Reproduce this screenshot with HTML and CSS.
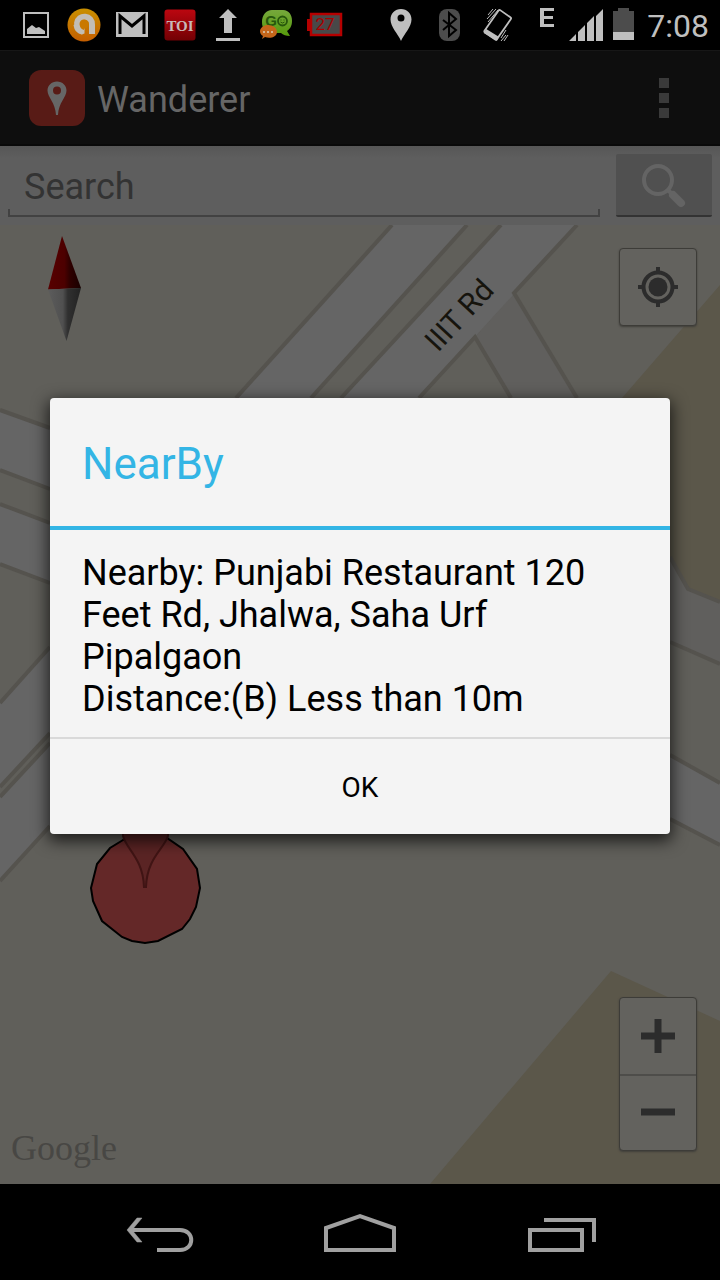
FILE: index.html
```html
<!DOCTYPE html>
<html lang="en">
<head>
<meta charset="utf-8">
<meta name="viewport" content="width=device-width, initial-scale=1">
<title>Wanderer</title>
<link rel="stylesheet" href="styles.css">
</head>
<body>
<div class="screen">
  <header class="status">
    <div class="status-group">
      <svg class="slot" viewBox="0 0 48 50"><rect x="24" y="13" width="24" height="24" transform="translate(-12 0)" fill="none" stroke="#bfbfbf" stroke-width="2"/><path d="M15 34v-5l5-4 4 3 3-1 6 4v3z" fill="#bfbfbf"/></svg>
      <svg class="slot" viewBox="0 0 48 50"><defs><linearGradient id="amber" x2="0" y2="1"><stop stop-color="#c99000"/><stop offset="1" stop-color="#c45e00"/></linearGradient></defs><circle cx="24" cy="25" r="16.500" fill="url(#amber)"/><path d="M23 31.500A7.500 7.500 0 1 1 32 24.500V34" fill="none" stroke="#c2bdb5" stroke-width="6"/><path d="M13.500 25q1 8 8 9.500l3-1v-5l-7-5z" fill="#c2bdb5"/><circle cx="24" cy="24" r="4.500" fill="#c97800"/><path d="M20 25h4v5q-4-1-4-5z" fill="#c97800"/></svg>
      <svg class="slot" viewBox="0 0 48 50"><path d="M8 12h32v25H8z" fill="#bfbfbf"/><path d="M12 34V16l12 10 12-10v18" fill="none" stroke="#000" stroke-width="3"/></svg>
      <svg class="slot" viewBox="0 0 48 50"><defs><linearGradient id="crimson" x2="0" y2="1"><stop stop-color="#bc0710"/><stop offset="1" stop-color="#720004"/></linearGradient></defs><rect x="8.500" y="9.500" width="31" height="31" rx="3" fill="url(#crimson)"/><text class="toi" x="24" y="31">TOI</text></svg>
      <svg class="slot" viewBox="0 0 48 50"><path d="M24 9l9 9h-5v15h-8V18h-5zM12 38h24v3H12z" fill="#bfbfbf"/></svg>
      <svg class="slot" viewBox="0 0 48 50"><defs><linearGradient id="leaf" x2="0" y2="1"><stop stop-color="#76a83c"/><stop offset="1" stop-color="#569a0c"/></linearGradient></defs><path d="M20 10h11c6 0 9 5 9 11 0 5-2 8-5 10l3 5q-6 0-9-3H18c-5 0-8-5-8-11 0-7 4-12 10-12z" fill="url(#leaf)"/><text class="go" x="19" y="26">G</text><circle cx="30.500" cy="21" r="4.500" fill="none" stroke="#27570c" stroke-width="1.800"/><path d="M28.500 20h1m2 0h1m-4 2q2 2 4 0" fill="none" stroke="#27570c"/><path d="M16 25c5 0 9 3 9 7 0 5-7 7-12 5l-3 2 1-3c-6-4-2-11 5-11z" fill="#c5661a"/><path d="M11 32h2m2 0h2m2 0h2" stroke="#d6b38f" stroke-width="2"/></svg>
      <svg class="slot" viewBox="0 0 48 50"><path d="M11 14h30v21H11z" fill="#484848" stroke="#b50000" stroke-width="2.500"/><path d="M7 19h4v12H7z" fill="#b50000"/><text class="level" x="25" y="30">27</text></svg>
    </div>
    <div class="status-group">
      <svg class="slot" viewBox="0 0 48 50"><path fill-rule="evenodd" d="M24 9c6 0 10.500 4.500 10.500 10.500C34.500 27 27 34 24 41 21 34 13.500 27 13.500 19.500 13.500 13.500 18 9 24 9zm0 5.500a3.500 3.500 0 1 0 0 7 3.500 3.500 0 0 0 0-7z" fill="#bfbfbf"/></svg>
      <svg class="slot" viewBox="0 0 48 50"><rect x="14" y="9" width="21" height="32" rx="8" fill="#4c4c4c"/><path d="M18 20l13 10-7 6V13l7 6-13 11" fill="none" stroke="#000" stroke-width="2"/></svg>
      <svg class="slot" viewBox="0 0 48 50"><g fill="none" stroke="#bfbfbf"><rect x="17" y="11" width="15" height="27" rx="1.500" stroke-width="1.800" transform="rotate(35 24 25)"/><path d="M12 31l13 8" stroke-width="4.500"/><path d="M15 15l5-6M14 19l9-10M15 22l10-12M28 41l5-6M31 41l4-6M28 38l5-8"/></g></svg>
      <svg class="signal" viewBox="0 0 76 50"><path d="M19 8h14v3H23v5h9v3h-9v5h10v3H19z" fill="#bfbfbf"/><path d="M48 41l7-7v7zM57 41v-9l7-7v16zM66 41V23l7-7v25zM75 41V16l7-7v32z" fill="#bfbfbf"/></svg>
      <svg class="battery" viewBox="0 0 22 50"><path d="M0 11h5V8h11v3h5v21H0z" fill="#4c4c4c"/><path d="M0 32h21v8H0z" fill="#bfbfbf"/></svg>
      <time class="clock">7:08</time>
    </div>
  </header>

  <div class="appbar">
    <svg class="logo" viewBox="0 0 56 56"><rect width="56" height="56" rx="12" fill="#581b16"/><path fill-rule="evenodd" d="M28 11.500c5.500 0 9.500 4 9.500 9 0 7-8 12-8.500 24.500h-2C26.500 32.500 18.500 27.500 18.500 20.500c0-5 4-9 9.500-9zm0 5a4 4 0 1 0 0 8 4 4 0 0 0 0-8z" fill="#666"/></svg>
    <h1 class="app-name">Wanderer</h1>
    <button class="overflow" type="button" aria-label="More options"><span class="dot"></span><span class="dot"></span><span class="dot"></span></button>
  </div>

  <form class="search">
    <div class="field"><input class="search-input" type="text" placeholder="Search" aria-label="Search"></div>
    <button class="search-button" type="button" aria-label="Search the map"><svg class="lens" viewBox="0 0 48 48"><circle cx="18" cy="19" r="14" fill="none" stroke="#646464" stroke-width="4"/><path d="M28 29l4 4" stroke="#646464" stroke-width="4"/><path d="M33 34l8 8" stroke="#646464" stroke-width="8" stroke-linecap="round"/></svg></button>
  </form>

  <main class="map">
    <svg class="map-canvas" viewBox="0 225 720 959" preserveAspectRatio="xMidYMid slice">
      <defs>
        <linearGradient id="red-needle"><stop stop-color="#580000"/><stop offset=".5" stop-color="#4c0000"/><stop offset=".65" stop-color="#300000"/><stop offset="1" stop-color="#180000"/></linearGradient>
        <linearGradient id="gray-needle"><stop stop-color="#5c5c5c"/><stop offset=".45" stop-color="#505050"/><stop offset=".6" stop-color="#303030"/><stop offset="1" stop-color="#222"/></linearGradient>
      </defs>
      <path d="M720 285L622 398v80l48 79 18 32 32 13zM611 971l109 50v163H430z" fill="#5b574a"/>
      <path d="M514 293l63 105v20h-54l-48-81zM670 557l18 32 32 13v62l-50-22z" fill="#605f5d"/>
      <path d="M392 225L236 398h75L467 225zM501 225L341 398h78L577 225zM0 410l50 18v61L0 470zM0 504l50 19v60L0 564zM50 647L0 703v84l50-54zM50 743L0 797v84l50-55zM670 755l50 28v62l-50-26z" fill="#656565"/>
      <path d="M392 225L236 398M467 225L311 398M501 225L341 398M577 225l-63 68 63 105M511 398l-36-61-56 61M0 410l50 18M0 470l50 19M0 504l50 19M0 564l50 19M50 647L0 703M50 733L0 787M50 743L0 797M50 826L0 881M670 557l18 32 32 13M670 642l50 22M670 755l50 28M670 819l50 26" fill="none" stroke="#55534e" stroke-width="4"/>
      <text class="road-name" transform="translate(438 353) rotate(-47)">IIIT Rd</text>
      <path d="M62 236L48 289.500 81 288z" fill="url(#red-needle)"/>
      <path d="M48 289.500L81 288 66.500 341z" fill="url(#gray-needle)"/>
      <path d="M123 840l-13 8-13 16-6 24 2 13 9 20 20 16 10 4 13 2 13-2 24-12 8-10 6-12 4-19-3-19-14-20-16-11-22-5z" fill="#642828" stroke="#000" stroke-width="2"/>
      <path d="M123 830v6c3 13 20 22 21 51h2c1-29 18-38 22-51v-6z" fill="#5a2424" stroke="#401414" stroke-width="2"/>
    </svg>
    <span class="brand">Google</span>
    <div class="controls">
      <button class="control" type="button" aria-label="My location"><svg class="glyph" viewBox="0 0 40 40"><g fill="none" stroke="#2c2c2c" stroke-width="4"><circle cx="20" cy="20" r="14.500"/><path d="M20 0v6M20 34v6M0 20h6M34 20h6"/></g><circle cx="20" cy="20" r="9.500" fill="#2c2c2c"/></svg></button>
      <div class="zoom">
        <button class="zoom-button" type="button" aria-label="Zoom in"><svg class="glyph" viewBox="0 0 40 40"><path d="M3 20h34M20 3v34" stroke="#2c2c2c" stroke-width="7"/></svg></button>
        <button class="zoom-button" type="button" aria-label="Zoom out"><svg class="glyph" viewBox="0 0 40 40"><path d="M3 19h34" stroke="#2c2c2c" stroke-width="7"/></svg></button>
      </div>
    </div>
  </main>

  <nav class="navbar">
    <button class="nav-button" type="button" aria-label="Back"><svg class="nav-icon" viewBox="0 0 72 48"><path d="M6 18h50c15 0 15 20 0 20H33" fill="none" stroke="#a0a0a0" stroke-width="4"/><path d="M3 18L13 6h5L8 18l10 12h-5z" fill="#a0a0a0" stroke="#a0a0a0" stroke-width=".5"/></svg></button>
    <button class="nav-button" type="button" aria-label="Home"><svg class="nav-icon" viewBox="0 0 72 48"><path d="M2 38V16L36 4l34 12v22z" fill="none" stroke="#a0a0a0" stroke-width="4"/></svg></button>
    <button class="nav-button" type="button" aria-label="Recent apps"><svg class="nav-icon" viewBox="0 0 72 48"><path d="M6 18h52v20H6zM20 8h50v22" fill="none" stroke="#a0a0a0" stroke-width="4"/></svg></button>
  </nav>

  <div class="overlay">
    <section class="dialog" role="dialog" aria-labelledby="dialog-title">
      <h2 class="dialog-title" id="dialog-title">NearBy</h2>
      <p class="message">Nearby: Punjabi Restaurant 120 Feet Rd, Jhalwa, Saha Urf Pipalgaon<br>Distance:(B) Less than 10m</p>
      <button class="ok" type="button">OK</button>
    </section>
  </div>
</div>
</body>
</html>
```
FILE: styles.css
```css
* { box-sizing: border-box; }
body { margin: 0; background: #000; font-family: Roboto, "Noto Sans", sans-serif; }
button { margin: 0; padding: 0; border: 0; background: none; font: inherit; color: inherit; }
svg { display: block; }

.screen { position: relative; display: flex; flex-direction: column; min-height: 100vh; }

.status { display: flex; justify-content: space-between; height: 50px; padding: 0 12px; background: #000; }
.status-group { display: flex; align-items: center; }
.slot { width: 48px; height: 50px; }
.signal { width: 76px; height: 50px; margin-right: 16px; overflow: visible; }
.battery { width: 22px; height: 50px; margin-right: 12px; }
.clock { padding-top: 2px; font-size: 32px; line-height: 48px; color: #bfbfbf; }
.status-group:last-child { margin-right: -1px; }
.toi { font: bold 15px "Liberation Serif", serif; fill: #c8b8b8; text-anchor: middle; }
.go { font: bold 15px "Liberation Sans", sans-serif; fill: #27570c; text-anchor: middle; }
.level { font: 17px Roboto, sans-serif; fill: #a80000; text-anchor: middle; }

.appbar { display: flex; align-items: center; height: 96px; padding-left: 29px; background: #0e0e0e; border-top: 1px solid #171717; border-bottom: 2px solid #090909; }
.logo { width: 56px; height: 56px; }
.app-name { flex: 1; margin: 0 0 0 12px; padding-top: 4px; font-size: 36px; font-weight: 400; color: #666; }
.overflow { display: flex; flex-direction: column; align-items: center; justify-content: center; gap: 5px; width: 112px; height: 93px; }
.dot { width: 10px; height: 10px; background: #3a3a3a; }

.search { display: flex; gap: 16px; height: 79px; padding: 8px; background: linear-gradient(#565656, #5e5e5e 12px); }
.field { position: relative; flex: 1; min-width: 0; height: 63px; border-bottom: 2px solid #424242; }
.field::before, .field::after { content: ""; position: absolute; bottom: 0; width: 2px; height: 6px; background: #424242; }
.field::before { left: 0; }
.field::after { right: 0; }
.search-input { width: 100%; height: 100%; padding: 7px 16px 3px; border: 0; outline: 0; background: none; font: 36px Roboto, sans-serif; color: #333; }
.search-input::placeholder { color: #333; opacity: 1; }
.search-button { display: flex; align-items: center; justify-content: center; width: 96px; height: 63px; background: #505050; border-bottom: 2px solid #333; border-radius: 2px; }
.lens { width: 48px; height: 48px; }

.map { position: relative; display: flex; flex: 1; align-items: flex-end; justify-content: space-between; min-height: 480px; padding: 23px 23px 33px 11px; overflow: hidden; background: #605f5a; }
.map-canvas { position: absolute; inset: 0; width: 100%; height: 100%; }
.road-name { font: 30px Roboto, sans-serif; fill: #16140d; }
.brand { position: relative; margin-bottom: -18px; font: 36px "Liberation Serif", serif; color: #484744; }
.controls { position: relative; display: flex; flex-direction: column; align-self: stretch; justify-content: space-between; }
.control, .zoom { border: 1px solid #3d3c38; border-radius: 4px; background: #63625e; box-shadow: 0 1px 2px #403f3b; }
.control, .zoom-button { display: flex; align-items: center; justify-content: center; }
.control { width: 78px; height: 78px; }
.zoom-button { width: 76px; height: 76px; }
.zoom-button + .zoom-button { border-top: 2px solid #4e4d4a; }
.glyph { width: 40px; height: 40px; }

.navbar { display: flex; height: 96px; padding: 0 60px; background: #000; }
.nav-button { display: flex; flex: 1; align-items: center; justify-content: center; }
.nav-icon { width: 72px; height: 48px; margin-top: 8px; }

.overlay { position: absolute; inset: 50px 0 96px; display: flex; align-items: center; justify-content: center; padding: 0 50px; }
.dialog { width: 100%; max-width: 620px; margin-bottom: 2px; border-radius: 4px; background: #f4f4f4; color: #000; box-shadow: 0 5px 16px 2px rgba(0, 0, 0, .7); }
.dialog-title { margin: 0; padding: 4px 32px 0; border-bottom: 4px solid #33b5e5; font-size: 44px; font-weight: 400; line-height: 124px; color: #33b5e5; }
.message { margin: 0; padding: 22px 32px 17px; font-size: 36px; line-height: 42px; }
.ok { display: block; width: 100%; height: 97px; padding-top: 2px; border-top: 2px solid #d9d9d9; font-size: 28px; }
```
